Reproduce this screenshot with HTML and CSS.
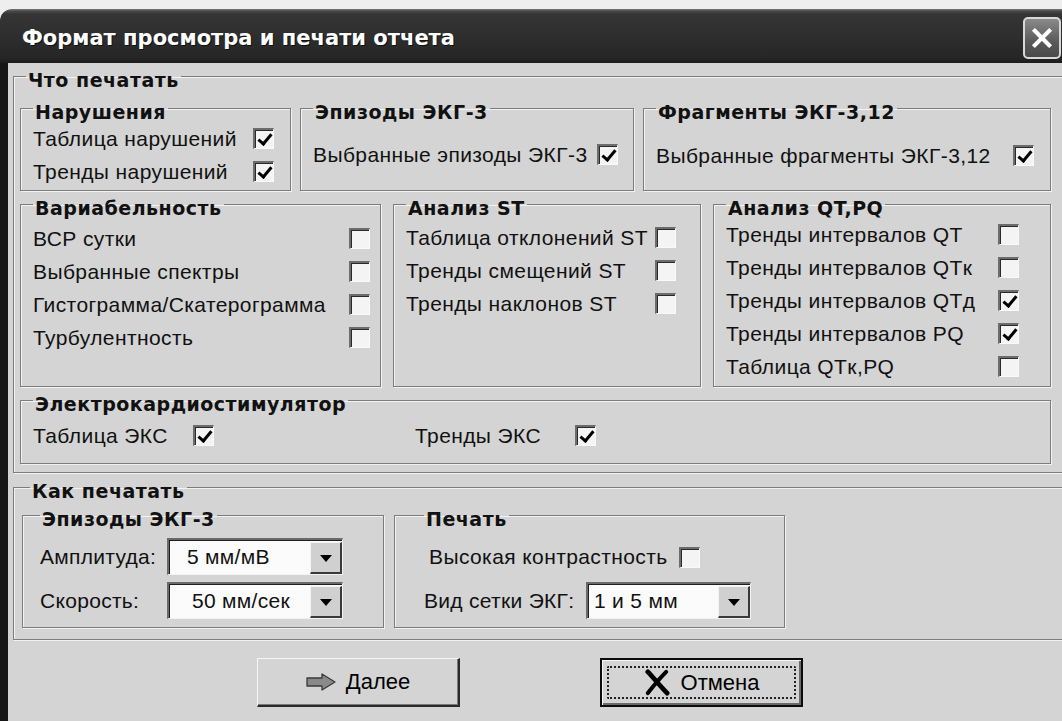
FILE: index.html
```html
<!DOCTYPE html>
<html lang="ru">
<head>
<meta charset="utf-8">
<title>Формат просмотра и печати отчета</title>
<link rel="stylesheet" href="styles.css">
</head>
<body>
<div class="window">
  <header class="titlebar">
    <h1 class="title">Формат просмотра и печати отчета</h1>
    <button class="close" type="button" aria-label="Закрыть">
      <svg viewBox="0 0 20 20" width="24" height="24"><path d="M4 4L16 16M16 4L4 16" stroke="#fff" stroke-width="3.4" stroke-linecap="square"/></svg>
    </button>
  </header>

  <main class="client">
    <fieldset class="group outer what">
      <legend>Что печатать</legend>

      <div class="row row-top">
        <fieldset class="group g-viol">
          <legend>Нарушения</legend>
          <label class="item"><span class="txt">Таблица нарушений</span><span class="cb on"></span></label>
          <label class="item"><span class="txt">Тренды нарушений</span><span class="cb on"></span></label>
        </fieldset>
        <fieldset class="group g-ep">
          <legend>Эпизоды ЭКГ-3</legend>
          <label class="item"><span class="txt">Выбранные эпизоды ЭКГ-3</span><span class="cb on"></span></label>
        </fieldset>
        <fieldset class="group g-fr">
          <legend>Фрагменты ЭКГ-3,12</legend>
          <label class="item"><span class="txt">Выбранные фрагменты ЭКГ-3,12</span><span class="cb on"></span></label>
        </fieldset>
      </div>

      <div class="row row-mid">
        <fieldset class="group g-hrv">
          <legend>Вариабельность</legend>
          <label class="item"><span class="txt">ВСР сутки</span><span class="cb"></span></label>
          <label class="item"><span class="txt">Выбранные спектры</span><span class="cb"></span></label>
          <label class="item"><span class="txt">Гистограмма/Скатерограмма</span><span class="cb"></span></label>
          <label class="item"><span class="txt">Турбулентность</span><span class="cb"></span></label>
        </fieldset>
        <fieldset class="group g-st">
          <legend>Анализ ST</legend>
          <label class="item"><span class="txt">Таблица отклонений ST</span><span class="cb"></span></label>
          <label class="item"><span class="txt">Тренды смещений ST</span><span class="cb"></span></label>
          <label class="item"><span class="txt">Тренды наклонов ST</span><span class="cb"></span></label>
        </fieldset>
        <fieldset class="group g-qt">
          <legend>Анализ QT,PQ</legend>
          <label class="item"><span class="txt">Тренды интервалов QT</span><span class="cb"></span></label>
          <label class="item"><span class="txt">Тренды интервалов QTк</span><span class="cb"></span></label>
          <label class="item"><span class="txt">Тренды интервалов QTд</span><span class="cb on"></span></label>
          <label class="item"><span class="txt">Тренды интервалов PQ</span><span class="cb on"></span></label>
          <label class="item"><span class="txt">Таблица QTк,PQ</span><span class="cb"></span></label>
        </fieldset>
      </div>

      <fieldset class="group g-pm">
        <legend>Электрокардиостимулятор</legend>
        <div class="pm-row">
          <label class="item"><span class="txt">Таблица ЭКС</span><span class="cb on"></span></label>
          <label class="item"><span class="txt">Тренды ЭКС</span><span class="cb on"></span></label>
        </div>
      </fieldset>
    </fieldset>

    <fieldset class="group outer how">
      <legend>Как печатать</legend>
      <div class="row row-how">
        <fieldset class="group g-epi">
          <legend>Эпизоды ЭКГ-3</legend>
          <div class="field">
            <span class="flabel">Амплитуда:</span>
            <div class="combo"><span class="val">5 мм/мВ</span><span class="drop"></span></div>
          </div>
          <div class="field">
            <span class="flabel">Скорость:</span>
            <div class="combo"><span class="val v-speed">50 мм/сек</span><span class="drop"></span></div>
          </div>
        </fieldset>
        <fieldset class="group g-print">
          <legend>Печать</legend>
          <label class="item contrast"><span class="txt">Высокая контрастность</span><span class="cb"></span></label>
          <div class="field grid-field">
            <span class="flabel">Вид сетки ЭКГ:</span>
            <div class="combo"><span class="val">1 и 5 мм</span><span class="drop"></span></div>
          </div>
        </fieldset>
      </div>
    </fieldset>

    <div class="buttons">
      <button class="btn next" type="button">
        <svg class="ico-arrow" viewBox="0 0 30 18" width="30" height="18"><path d="M1 5H16V1L29 9L16 17V13H1Z" fill="#8a8a8a" stroke="#3a3a3a" stroke-width="1.3" stroke-linejoin="round"/></svg>
        <span>Далее</span>
      </button>
      <button class="btn cancel" type="button">
        <span class="focus">
          <svg class="ico-x" viewBox="0 0 28 28" width="27" height="27"><path d="M4 3C10 9 16 17 24 25" stroke="#000" stroke-width="5" stroke-linecap="round" fill="none"/><path d="M23 3C17 9 11 16 4 25" stroke="#000" stroke-width="4.2" stroke-linecap="round" fill="none"/></svg>
          <span>Отмена</span>
        </span>
      </button>
    </div>
  </main>
</div>
</body>
</html>
```

FILE: styles.css
```css
* { box-sizing: border-box; }

html, body {
  margin: 0;
  padding: 0;
}

body {
  width: 1062px;
  height: 721px;
  overflow: hidden;
  background: #eeeeee;
  font-family: "Liberation Sans", Arial, sans-serif;
  color: #111;
}

/* ---------- window frame ---------- */
.window {
  margin-top: 9px;
  width: 1075px;
  height: 712px;
  display: flex;
  flex-direction: column;
}

.titlebar {
  flex: none;
  height: 54px;
  display: flex;
  align-items: center;
  padding: 4px 0 0 22px;
  border-top-left-radius: 12px;
  border-top-right-radius: 12px;
  background: linear-gradient(#7a7a7a 0, #4a4a4a 2px, #353535 5px, #2e2e2e 50%, #262626 90%, #1c1c1c 100%);
}

.title {
  margin: 0;
  color: #fff;
  font: bold 21px "DejaVu Sans", sans-serif;
  letter-spacing: 0;
  text-shadow: 1px 1px 0 #111;
}

.close {
  margin-left: auto;
  margin-right: 14px;
  width: 38px;
  height: 42px;
  padding: 0;
  display: flex;
  align-items: center;
  justify-content: center;
  border: 2px solid #d8d8d8;
  border-radius: 5px;
  background: linear-gradient(#8a8a8a, #5a5a5a 60%, #4a4a4a);
}

.client {
  flex: 1;
  display: flex;
  flex-direction: column;
  padding-left: 5px;
  border-left: 8px solid #161616;
  background: #d4d4d4;
}

/* ---------- group boxes ---------- */
.group {
  margin: 0;
  min-width: 0;
  padding: 0 12px;
  border: 1px solid #7c7c7c;
  box-shadow: inset 1px 1px 0 #f2f2f2, 1px 1px 0 #f2f2f2;
}

.group > legend {
  padding: 8px 2px 0;
  font: bold 19px/18px "DejaVu Sans", sans-serif;
  letter-spacing: 0.5px;
  color: #111;
}

.outer {
  padding: 6px 0 8px 6px;
}
.outer > legend { margin-left: 6px; }

.what { height: 410px; }

.how {
  margin-top: 1px;
  height: 166px;
  padding-top: 2px;
  padding-left: 8px;
}
.how > legend { margin-left: 8px; }

.row {
  display: flex;
}

.row-top { height: 96px; gap: 9px; }
.row-mid { height: 196px; gap: 12px; }

.row-top > .group { height: 96px; }
.row-mid > .group { height: 196px; }

.g-viol { width: 271px; padding-top: 1px; }
.g-ep   { width: 334px; padding-top: 17px; }
.g-fr   { width: 408px; padding-top: 18px; }

.g-hrv  { width: 361px; padding-top: 5px; }
.g-st   { width: 308px; padding-top: 4px; }
.g-qt   { width: 338px; padding-top: 1px; }

.g-pm {
  width: 1031px;
  height: 77px;
  padding-top: 6px;
}

/* ---------- check items ---------- */
.item {
  display: flex;
  align-items: center;
  height: 33px;
  font-size: 21px;
  letter-spacing: 0.4px;
  white-space: nowrap;
}

.txt { flex: none; }

.g-viol .txt { width: 220px; }
.g-ep .txt   { width: 284px; }
.g-fr .txt   { width: 357px; }
.g-hrv .txt  { width: 316px; }
.g-st .txt   { width: 249px; }
.g-qt .txt   { width: 272px; }

.pm-row { display: flex; }
.pm-row .txt { width: 160px; }
.pm-row .item + .item { margin-left: 201px; }

.cb {
  position: relative;
  flex: none;
  width: 21px;
  height: 21px;
  background: #f4f4f4;
  border-style: solid;
  border-width: 2px 1px 1px 2px;
  border-color: #6c6c6c #fafafa #fafafa #6c6c6c;
  box-shadow: inset 1px 1px 0 #2a2a2a;
}

/* check mark: a rotated "L" drawn inside the box */
.cb.on::after {
  content: "";
  position: absolute;
  left: 6px;
  top: 1px;
  width: 5px;
  height: 11px;
  border: solid #000;
  border-width: 0 3px 3px 0;
  transform: rotate(40deg);
}

/* ---------- "how to print" ---------- */
.row-how { gap: 10px; }

.row-how > .group { height: 126px; }

.g-epi {
  width: 362px;
  padding: 10px 0 0 17px;
}

.g-print {
  width: 391px;
  padding: 12px 0 0 29px;
}

.field {
  display: flex;
  align-items: center;
  height: 37px;
  font-size: 21px;
  letter-spacing: 0.3px;
}
.field + .field { margin-top: 7px; }

.flabel { width: 127px; flex: none; white-space: nowrap; }

.g-epi .combo { width: 176px; }

.contrast { height: 34px; margin-left: 5px; }
.contrast .txt { width: 250px; }

.grid-field { margin-top: 8px; }
.grid-field .flabel { width: 162px; }
.grid-field .combo { width: 165px; }

.combo {
  display: flex;
  height: 37px;
  background: #fbfbfb;
  border-style: solid;
  border-width: 2px 1px 1px 2px;
  border-color: #6a6a6a #f2f2f2 #f2f2f2 #6a6a6a;
  box-shadow: inset 1px 1px 0 #1e1e1e;
}

.val {
  flex: 1;
  align-self: center;
  padding-left: 18px;
  font-size: 21px;
  white-space: nowrap;
}
.v-speed { padding-left: 23px; }
.grid-field .val { padding-left: 6px; }

.drop {
  position: relative;
  flex: none;
  width: 32px;
  margin: 2px 0 0 0;
  background: #d0d0d0;
  border-style: solid;
  border-width: 1px 2px 2px 1px;
  border-color: #f4f4f4 #3a3a3a #3a3a3a #f4f4f4;
}

.drop::after {
  content: "";
  position: absolute;
  left: 50%;
  top: 50%;
  margin: -3px 0 0 -6px;
  border-style: solid;
  border-width: 7px 6px 0 6px;
  border-color: #000 transparent transparent transparent;
}

/* ---------- push buttons ---------- */
.buttons {
  display: flex;
  margin-top: 18px;
  padding-left: 244px;
  gap: 140px;
}

.btn {
  width: 203px;
  height: 49px;
  padding: 0;
  display: flex;
  align-items: center;
  justify-content: center;
  gap: 10px;
  font: 22px "Liberation Sans", Arial, sans-serif;
  color: #000;
  background: #d4d4d4;
  border-style: solid;
  border-width: 1px 2px 2px 1px;
  border-color: #f6f6f6 #2a2a2a #2a2a2a #f6f6f6;
  box-shadow: inset -1px -1px 0 #7a7a7a;
}

.cancel {
  border: 2px solid #0c0c0c;
  box-shadow: inset 1px 1px 0 #f6f6f6, inset -2px -2px 0 #6a6a6a;
}

.focus {
  width: 189px;
  height: 33px;
  display: flex;
  align-items: center;
  justify-content: center;
  gap: 10px;
  border: 2px dotted #222;
  border-radius: 2px;
}
```
